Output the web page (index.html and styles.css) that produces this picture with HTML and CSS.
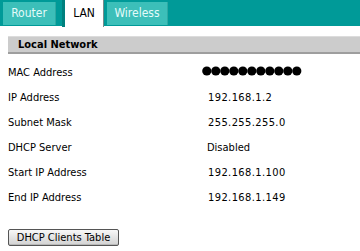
FILE: index.html
```html
<!DOCTYPE html>
<html>
<head>
<meta charset="utf-8">
<link rel="stylesheet" href="styles.css">
</head>
<body>
<div class="tabbar">
  <div class="tab tab-router">Router</div>
  <div class="tab tab-active">LAN</div>
  <div class="tab tab-wireless">Wireless</div>
</div>
<div class="content">
  <div class="section-head">Local Network</div>
  <div class="rows">
    <div class="row"><span class="label">MAC Address</span><span class="value mac-cell">
      <svg class="mac" width="104" height="11" viewBox="0 0 104 11">
        <g fill="#000">
          <circle cx="4.8" cy="5" r="4.6"/><circle cx="13.8" cy="5" r="4.6"/><circle cx="22.8" cy="5" r="4.6"/>
          <circle cx="31.8" cy="5" r="4.6"/><circle cx="40.8" cy="5" r="4.6"/><circle cx="49.8" cy="5" r="4.6"/>
          <circle cx="58.8" cy="5" r="4.6"/><circle cx="67.8" cy="5" r="4.6"/><circle cx="76.8" cy="5" r="4.6"/>
          <circle cx="85.8" cy="5" r="4.6"/><circle cx="94.8" cy="5" r="4.6"/>
        </g>
      </svg></span></div>
    <div class="row"><span class="label">IP Address</span><span class="value ip">192.168.1.2</span></div>
    <div class="row"><span class="label">Subnet Mask</span><span class="value ip">255.255.255.0</span></div>
    <div class="row"><span class="label">DHCP Server</span><span class="value">Disabled</span></div>
    <div class="row"><span class="label">Start IP Address</span><span class="value ip">192.168.1.100</span></div>
    <div class="row"><span class="label">End IP Address</span><span class="value ip">192.168.1.149</span></div>
  </div>
  <button class="btn">DHCP Clients Table</button>
</div>
</body>
</html>
```
FILE: styles.css
```css
html, body {
  margin: 0;
  padding: 0;
  background: #fff;
}
body {
  font-family: "DejaVu Sans Condensed", "DejaVu Sans", sans-serif;
  font-size: 11px;
  color: #000;
  width: 360px;
  height: 251px;
  overflow: hidden;
}
.tabbar {
  height: 26px;
  background: #009a98;
  display: flex;
  align-items: flex-end;
  padding-left: 3px;
}
.tab {
  box-sizing: border-box;
  height: 23px;
  line-height: 23px;
  text-align: center;
  font-size: 12px;
  color: #e4fbfa;
  background: #3cbfb9;
  margin-bottom: 1px;
}
.tab-router {
  width: 53px;
  margin-right: 6px;
  border-right: 1px solid #2eaaa4;
}
.tab-active {
  width: 42px;
  height: 27px;
  line-height: 27px;
  margin-bottom: -1px;
  background: #fff;
  color: #000;
  border-left: 3px solid #00807e;
  border-right: 1px solid #7a8a8a;
  margin-right: 3px;
  align-self: flex-start;
}
.tab-wireless {
  width: 61px;
  border-right: 1px solid #2eaaa4;
}
.content {
  padding: 10px 0 0 8px;
}
.section-head {
  box-sizing: border-box;
  height: 18px;
  line-height: 16px;
  background: #cccccc;
  border-top: 1px solid #dcdcdc;
  border-bottom: 2px solid #9e9e9e;
  font-weight: bold;
  font-size: 11px;
  padding-left: 10px;
}
.rows {
  margin-top: 6px;
}
.row {
  display: flex;
  height: 25px;
  line-height: 25px;
}
.label {
  width: 199px;
}
.value {
  display: flex;
  align-items: center;
}
.mac-cell {
  margin-left: -5px;
  margin-top: -3px;
}
.ip {
  padding-left: 1px;
  letter-spacing: 0.4px;
}
.mac {
  display: block;
}
.btn {
  margin-top: 19px;
  display: block;
  width: 111px;
  height: 17px;
  padding: 0;
  font-family: "DejaVu Sans Condensed", "DejaVu Sans", sans-serif;
  font-size: 11px;
  color: #000;
  border: 1px solid #555;
  border-radius: 2px;
  background: linear-gradient(#f8f8f8, #e4e4e4 50%, #d2d2d2);
  box-shadow: inset 0 -1px 0 #b8b8b8;
}
```
